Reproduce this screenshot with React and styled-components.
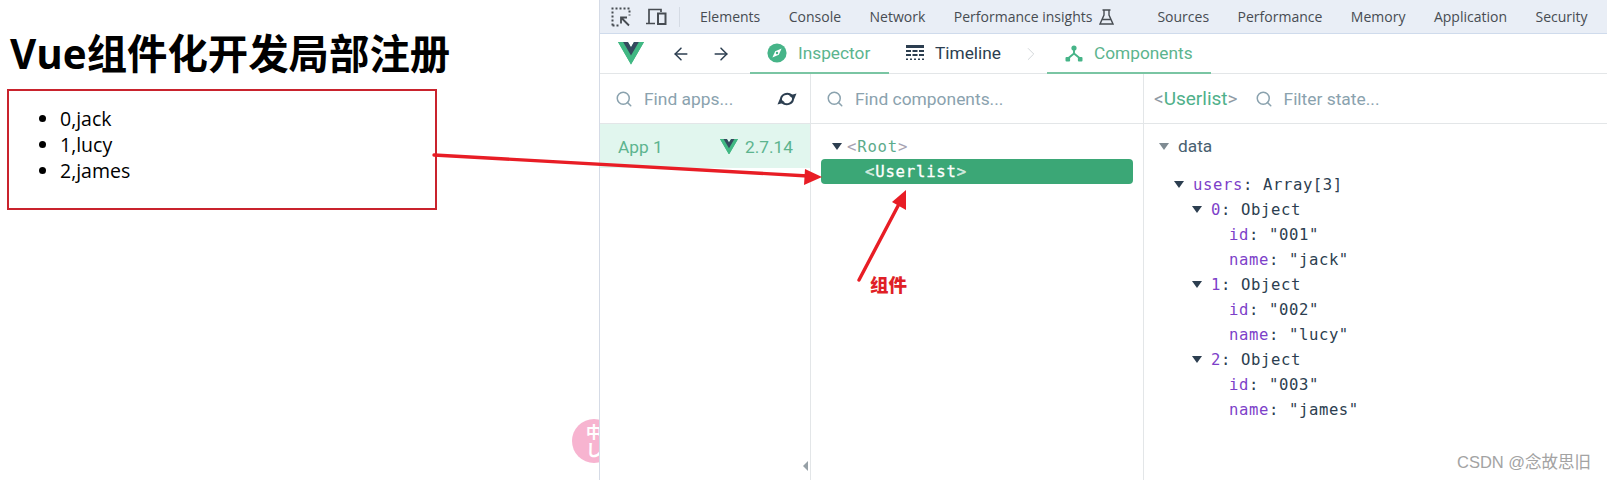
import React from "react";
import styled, { createGlobalStyle } from "styled-components";
import { Search, ArrowLeft, ArrowRight, ChevronRight } from "lucide-react";

const Global = createGlobalStyle`
  html, body { margin: 0; padding: 0; background: #fff; }
  * { box-sizing: border-box; }
`;
const MONO = `"DejaVu Sans Mono", "Liberation Mono", monospace`;
const UI = `Roboto, "Noto Sans", sans-serif`;

const Page = styled.div`
  position: relative; width: 1607px; height: 480px; overflow: hidden; display: flex; background: #fff;
`;
const Preview = styled.section`
  position: relative; width: 599px; flex: none; padding: 27px 0 0 7px;
  font-family: "Open Sans", "Noto Sans CJK SC", sans-serif; color: #000;
`;
const Title = styled.h1`
  margin: 0 0 8px 3px; height: 54px; font-size: 40.4px; line-height: 54px; font-weight: 700; white-space: nowrap;
`;
const Box = styled.div`
  width: 430px; height: 121px; border: 2px solid #c9232d; padding: 15px 0 0 0;
`;
const Users = styled.ul`
  margin: 0; padding: 0 0 0 51px; font-size: 19.5px; line-height: 26px; list-style: disc;
`;
const Badge = styled.div`
  position: absolute; left: 572px; top: 419px; width: 44px; height: 44px; border-radius: 50%; background: #f7b4d0;
  color: #fff; font-size: 16px; line-height: 18px; font-weight: 700; text-align: center; padding-top: 3px;
  font-family: "Noto Sans CJK SC", sans-serif;
`;
const Tools = styled.section`
  position: relative; z-index: 1; flex: 1; display: flex; flex-direction: column; background: #fff; border-left: 1px solid #d5dbe6;
`;
const DevBar = styled.nav`
  height: 34px; flex: none; display: flex; align-items: center; background: #e9eef6; border-bottom: 1px solid #cfdbec;
  padding: 0 0 0 11px; font-family: "Open Sans", sans-serif; font-size: 14px; color: #474c52;
`;
const IconSlot = styled.span`
  display: flex; margin-right: ${(p) => p.$gap}px;
`;
const Sep = styled.i`
  width: 1px; height: 20px; background: #d5dbe4; margin-right: 20px;
`;
const DevTab = styled.span`
  margin-right: ${(p) => p.$gap ?? 28.5}px; white-space: nowrap;
`;
const VueBar = styled.div`
  height: 40px; flex: none; display: flex; align-items: stretch; border-bottom: 1px solid #e3e6e8;
  font-family: ${UI}; font-size: 17.3px; padding-left: 18px;
`;
const LogoSlot = styled.span`
  display: flex; align-items: center; width: 53px;
`;
const NavBtn = styled.span`
  display: flex; align-items: center; width: ${(p) => p.$w}px; color: #2c3e50;
`;
const VueTab = styled.span`
  display: flex; align-items: center; gap: 11px; width: ${(p) => p.$w}px;
  padding-left: ${(p) => p.$pad}px; height: 40px; white-space: nowrap;
  color: ${(p) => (p.$on ? "#5cb48e" : "#2c3e50")};
  border-bottom: 2px solid ${(p) => (p.$on ? "#7ac5a3" : "transparent")};
`;
const Crumb = styled.span`
  display: flex; align-items: center; justify-content: flex-end; width: 34px; padding-right: 5px; color: #cfd3d6;
`;
const Columns = styled.div`
  flex: 1; display: grid; grid-template-columns: 210px 333px 1fr; font-family: ${UI}; min-height: 0;
`;
const Col = styled.div`
  position: relative; display: flex; flex-direction: column; min-width: 0; border-left: ${(p) => (p.$first ? "0" : "1px solid #e3e6e8")};
`;
const SearchRow = styled.div`
  height: 50px; flex: none; display: flex; align-items: center; gap: 11px; padding-left: ${(p) => p.$pad}px;
  border-bottom: 1px solid #e3e6e8; font-size: 17.4px; color: #8aa2ae; white-space: nowrap;
`;
const SyncSlot = styled.span`
  display: flex; margin-left: 33px; color: #2c3e50;
`;
const Current = styled.span`
  color: #8f9ba5; margin-right: 6px; font-size: 19px;
  b { font-weight: 400; color: #4fb08a; }
`;
const AppRow = styled.div`
  height: 44px; display: flex; align-items: center; background: #e1f6ee; padding: 1px 0 0 18px; font-size: 17.3px; color: #5cb48e;
`;
const AppVersion = styled.span`
  margin-left: auto; margin-right: 17px; display: flex; align-items: center; gap: 7px;
`;
const TreeBody = styled.div`
  flex: 1; padding: 10px 10px 0 10px; font-family: ${MONO}; font-size: 15.6px; letter-spacing: 0.8px;
`;
const TreeRow = styled.div`
  height: ${(p) => (p.$sel ? 25 : 25)}px; display: flex; align-items: center; white-space: pre; border-radius: 4px;
  padding-left: ${(p) => p.$pad}px; color: ${(p) => (p.$sel ? "#fff" : "#5cab8b")};
  background: ${(p) => (p.$sel ? "#3ba776" : "transparent")};
  em { font-style: normal; color: ${(p) => (p.$sel ? "#bfe3d2" : "#a7a3b2")}; }
  ${(p) => p.$sel && "-webkit-text-stroke: 0.3px #fff;"}
`;
const Caret = styled.span`
  width: 0; height: 0; flex: none; border-left: ${(p) => p.$s}px solid transparent; border-right: ${(p) => p.$s}px solid transparent;
  border-top: ${(p) => p.$s + 2}px solid ${(p) => p.$c}; margin-right: ${(p) => p.$gap}px;
`;
const ScrollHint = styled.span`
  position: absolute; right: 2px; bottom: 9px; width: 0; height: 0;
  border-top: 5px solid transparent; border-bottom: 5px solid transparent; border-right: 5px solid #96a0a6;
`;
const State = styled.div`
  flex: 1; padding: 9px 0 0 15px;
`;
const Section = styled.div`
  display: flex; align-items: center; height: 26px; font-size: 17.3px; color: #486070; margin-bottom: 13px;
`;
const PropRow = styled.div`
  height: 25px; display: flex; align-items: center; white-space: pre; padding-left: ${(p) => p.$pad}px;
  font-family: ${MONO}; font-size: 15.6px; letter-spacing: 0.6px; color: #2c3e50;
  b { font-weight: 400; color: #7d3fc9; }
`;
const Mark = styled.span`
  width: ${(p) => p.$w}px; flex: none;
`;
const Overlay = styled.svg`
  position: absolute; inset: 0; z-index: 2; pointer-events: none;
`;
const Note = styled.span`
  position: absolute; z-index: 2; left: 870px; top: 271px; font-family: "Noto Sans CJK SC", sans-serif;
  font-size: 18.5px; line-height: 26px; font-weight: 900; color: #e01f27;
`;
const Watermark = styled.span`
  position: absolute; z-index: 2; left: 1457px; top: 452px; font-family: "Liberation Sans", "Noto Sans CJK SC", sans-serif;
  font-size: 16.5px; line-height: 20px; color: #a3a3a3; white-space: nowrap;
`;

const VueLogo = ({ w }) => (
  <svg width={w} viewBox="0 0 256 221" style={{ display: "block" }}>
    <path fill="#41B883" d="M204.8 0H256L128 220.8 0 0h97.92L128 51.2 157.44 0h47.36z" />
    <path fill="#41B883" d="M0 0l128 220.8L256 0h-51.2L128 132.48 50.56 0H0z" />
    <path fill="#35495E" d="M50.56 0L128 133.12 204.8 0h-47.36L128 51.2 97.92 0H50.56z" />
  </svg>
);
const InspectIcon = () => (
  <svg width="20" height="20" viewBox="0 0 20 20" fill="none" stroke="#474c52">
    <path d="M1.5 18.5v-17h17v7" strokeWidth="2" strokeDasharray="2 2" />
    <path d="M1.5 18.5h7" strokeWidth="2" strokeDasharray="2 2" />
    <path d="M18 18.5 10 10.5M10 16.5v-6h6" strokeWidth="1.8" />
  </svg>
);
const DeviceIcon = () => (
  <svg width="22" height="20" viewBox="0 0 22 20" fill="none" stroke="#474c52" strokeWidth="1.7">
    <path d="M1 16.5h9M4 16V2.5h12v2.5" />
    <rect x="13" y="6.5" width="7.5" height="10.5" strokeWidth="2" />
  </svg>
);
const FlaskIcon = () => (
  <svg width="15" height="16" viewBox="0 0 15 16" fill="none" stroke="#474c52" strokeWidth="1.4">
    <path d="M3.5 1h8M5 1v5L1 15h13L10 6V1M3.5 10.5h8" />
  </svg>
);
const CompassIcon = () => (
  <svg width="20" height="20" viewBox="0 0 20 20">
    <circle cx="10" cy="10" r="9.6" fill="#46b488" />
    <path d="M14.6 5.4 11.8 11.8 5.4 14.6 8.2 8.2z" fill="#fff" />
    <circle cx="10" cy="10" r="1.2" fill="#46b488" />
  </svg>
);
const TimelineIcon = () => (
  <svg width="18" height="16" viewBox="0 0 18 16" fill="#2c3e50">
    <rect y="0" width="18" height="3" />
    <rect y="5" width="5" height="2" /><rect x="6.5" y="5" width="5" height="2" /><rect x="13" y="5" width="5" height="2" />
    <rect y="9" width="5" height="2" /><rect x="6.5" y="9" width="5" height="2" /><rect x="13" y="9" width="5" height="2" />
    <rect y="13.5" width="2" height="1.5" /><rect x="4" y="13.5" width="2" height="1.5" /><rect x="8" y="13.5" width="2" height="1.5" /><rect x="12" y="13.5" width="2" height="1.5" /><rect x="16" y="13.5" width="2" height="1.5" />
  </svg>
);
const TreeIcon = () => (
  <svg width="18" height="17" viewBox="0 0 18 17" fill="#46b488" stroke="#46b488">
    <circle cx="9" cy="3" r="2.6" strokeWidth="0" />
    <rect x="0.5" y="12" width="4.6" height="4.6" rx="1" strokeWidth="0" />
    <rect x="12.9" y="12" width="4.6" height="4.6" rx="1" strokeWidth="0" />
    <path d="M9 4v5M9 8.5 3.5 13M9 8.5l5.5 4.5" strokeWidth="1.9" fill="none" />
  </svg>
);
const SyncIcon = () => (
  <svg width="20" height="16" viewBox="0 0 20 16" fill="none" stroke="#2c3e50" strokeWidth="2">
    <path d="M4 9C3.5 4 10 .5 15 4.5" />
    <path d="M16 7C16.5 12 10 15.500 5 11.500" />
    <path d="M19.500 2.500 17 8.500 12 4.500z" fill="#2c3e50" strokeWidth="0" />
    <path d="M.5 13.500 3 7.500 8 11.500z" fill="#2c3e50" strokeWidth="0" />
  </svg>
);
const Find = () => <Search size={18} strokeWidth={2} color="#8aa2ae" />;

const props = [
  [15, 18, <><b>users</b>: Array[3]</>],
  [33, 18, <><b>0</b>: Object</>],
  [51, 0, <><b>id</b>: "001"</>],
  [51, 0, <><b>name</b>: "jack"</>],
  [33, 18, <><b>1</b>: Object</>],
  [51, 0, <><b>id</b>: "002"</>],
  [51, 0, <><b>name</b>: "lucy"</>],
  [33, 18, <><b>2</b>: Object</>],
  [51, 0, <><b>id</b>: "003"</>],
  [51, 0, <><b>name</b>: "james"</>],
];

export default function App() {
  return (
    <Page>
      <Global />
      <Preview>
        <Title>Vue组件化开发局部注册</Title>
        <Box>
          <Users>
            <li>0,jack</li>
            <li>1,lucy</li>
            <li>2,james</li>
          </Users>
        </Box>
      </Preview>
      <Badge>中<br />し</Badge>
      <Tools>
        <DevBar>
          <IconSlot $gap={14}><InspectIcon /></IconSlot>
          <IconSlot $gap={12}><DeviceIcon /></IconSlot>
          <Sep />
          <DevTab>Elements</DevTab>
          <DevTab>Console</DevTab>
          <DevTab>Network</DevTab>
          <DevTab $gap={7}>Performance insights</DevTab>
          <IconSlot $gap={43}><FlaskIcon /></IconSlot>
          <DevTab>Sources</DevTab>
          <DevTab>Performance</DevTab>
          <DevTab>Memory</DevTab>
          <DevTab>Application</DevTab>
          <DevTab>Security</DevTab>
        </DevBar>
        <VueBar>
          <LogoSlot><VueLogo w={26} /></LogoSlot>
          <NavBtn $w={40}><ArrowLeft size={20} strokeWidth={1.8} /></NavBtn>
          <NavBtn $w={39}><ArrowRight size={20} strokeWidth={1.8} /></NavBtn>
          <VueTab $on $w={139} $pad={17}><CompassIcon />Inspector</VueTab>
          <VueTab $w={124} $pad={17}><TimelineIcon />Timeline</VueTab>
          <Crumb><ChevronRight size={22} strokeWidth={1} /></Crumb>
          <VueTab $on $w={164} $pad={18}><TreeIcon />Components</VueTab>
        </VueBar>
        <Columns>
          <Col $first>
            <SearchRow $pad={15}><Find />Find apps...<SyncSlot><SyncIcon /></SyncSlot></SearchRow>
            <AppRow>App 1<AppVersion><VueLogo w={18} />2.7.14</AppVersion></AppRow>
            <ScrollHint />
          </Col>
          <Col>
            <SearchRow $pad={15}><Find />Find components...</SearchRow>
            <TreeBody>
              <TreeRow $pad={11}><Caret $s={5} $c="#2c3e50" $gap={5} /><em>&lt;</em>Root<em>&gt;</em></TreeRow>
              <TreeRow $sel $pad={44}><em>&lt;</em>Userlist<em>&gt;</em></TreeRow>
            </TreeBody>
          </Col>
          <Col>
            <SearchRow $pad={10}><Current>&lt;<b>Userlist</b>&gt;</Current><Find />Filter state...</SearchRow>
            <State>
              <Section><Caret $s={5} $c="#7f8b93" $gap={9} />data</Section>
              {props.map(([pad, caret, text], i) => (
                <PropRow key={i} $pad={pad}>
                  {caret ? <Caret $s={5} $c="#2c3e50" $gap={9} /> : <Mark $w={19} />}
                  {text}
                </PropRow>
              ))}
            </State>
          </Col>
        </Columns>
      </Tools>
      <Overlay width="1607" height="480" viewBox="0 0 1607 480">
        <path d="M434 155 808 176" stroke="#e81d25" strokeWidth="3.4" strokeLinecap="round" />
        <path d="M822 177 805 169 804 185z" fill="#e81d25" />
        <path d="M859 280 899 204" stroke="#e81d25" strokeWidth="3.4" strokeLinecap="round" />
        <path d="M906 190 892 202 906 210z" fill="#e81d25" />
      </Overlay>
      <Note>组件</Note>
      <Watermark>CSDN @念故思旧</Watermark>
    </Page>
  );
}
